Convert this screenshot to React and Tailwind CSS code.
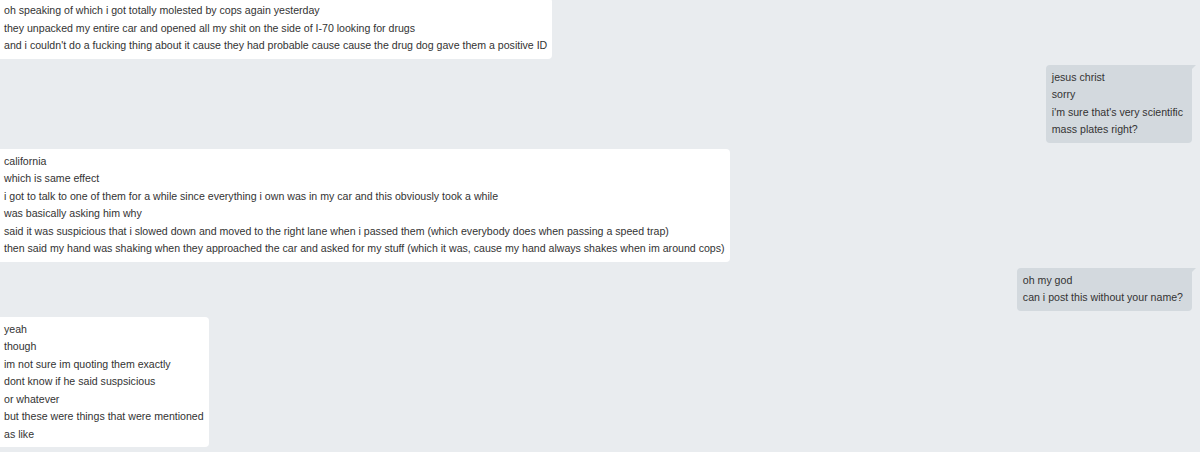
import React from 'react';

const messages = [
  {
    me: false,
    lines: [
      'oh speaking of which i got totally molested by cops again yesterday',
      'they unpacked my entire car and opened all my shit on the side of I-70 looking for drugs',
      "and i couldn't do a fucking thing about it cause they had probable cause cause the drug dog gave them a positive ID",
    ],
  },
  {
    me: true,
    lines: ['jesus christ', 'sorry', "i'm sure that's very scientific", 'mass plates right?'],
  },
  {
    me: false,
    lines: [
      'california',
      'which is same effect',
      'i got to talk to one of them for a while since everything i own was in my car and this obviously took a while',
      'was basically asking him why',
      'said it was suspicious that i slowed down and moved to the right lane when i passed them (which everybody does when passing a speed trap)',
      'then said my hand was shaking when they approached the car and asked for my stuff (which it was, cause my hand always shakes when im around cops)',
    ],
  },
  {
    me: true,
    lines: ['oh my god', 'can i post this without your name?'],
  },
  {
    me: false,
    lines: [
      'yeah',
      'though',
      'im not sure im quoting them exactly',
      'dont know if he said suspsicious',
      'or whatever',
      'but these were things that were mentioned',
      'as like',
    ],
  },
];

const Bubble = ({ me, lines }) => {
  if (me) {
    return (
      <div className="relative self-end mr-[8px] w-fit rounded-[4px] rounded-tr-none bg-[#d3d9de] py-[4px] pl-[6px] pr-[9px]">
        <svg className="absolute -right-[4px] top-0" width="5" height="5" viewBox="0 0 5 5">
          <path d="M0 0 L5 0 L0 5 Z" fill="#d3d9de" />
        </svg>
        {lines.map((l, i) => (
          <div key={i} className="whitespace-nowrap">{l}</div>
        ))}
      </div>
    );
  }
  return (
    <div className="self-start w-fit rounded-r-[4px] bg-white py-[4px] pl-[4px] pr-[5px]">
      {lines.map((l, i) => (
        <div key={i} className="whitespace-nowrap">{l}</div>
      ))}
    </div>
  );
};

export default function App() {
  return (
    <div className="h-[452px] w-[1200px] overflow-hidden bg-[#e9ecef] font-['Liberation_Sans',Arial,sans-serif] text-[10.6px] leading-[17.5px] text-[#333]">
      <div className="flex flex-col gap-[6px] -mt-[2px]">
        {messages.map((m, i) => (
          <Bubble key={i} me={m.me} lines={m.lines} />
        ))}
      </div>
    </div>
  );
}
